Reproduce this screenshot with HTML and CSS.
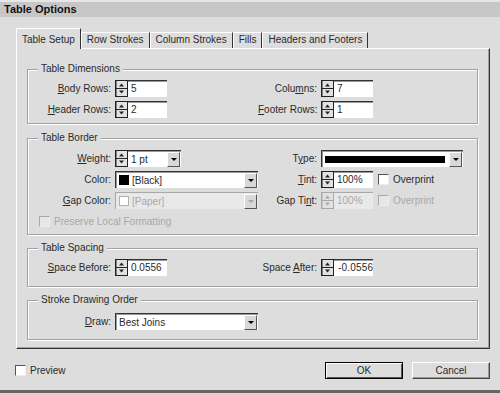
FILE: index.html
```html
<!DOCTYPE html>
<html lang="en">
  <head>
    <meta charset="UTF-8" />
    <title>Table Options</title>
    <link rel="stylesheet" href="styles.css">
  </head>
  <body>
    <!-- shared spinner glyph -->
    <svg class="defs" width="0" height="0">
      <symbol id="spin" viewBox="0 0 13 17">
        <rect x="0.5" y="0.5" width="12" height="16" fill="#e2e2e2" stroke="currentColor" />
        <path d="M1 0.5V16.5" stroke="currentColor" />
        <path d="M1 8.5H12" stroke="currentColor" />
        <path d="M4 6.5h5L6.5 3.5z M4 10.5h5L6.5 13.5z" fill="currentColor" />
      </symbol>
    </svg>

    <div class="window">
      <div class="titlebar">Table Options</div>

      <div class="content">
        <!-- Tabs -->
        <div class="tabs">
          <div class="tab active">Table Setup</div>
          <div class="tab">Row Strokes</div>
          <div class="tab">Column Strokes</div>
          <div class="tab">Fills</div>
          <div class="tab">Headers and Footers</div>
        </div>

        <div class="panel">
          <!-- Table Dimensions -->
          <fieldset class="group dims">
            <legend>Table Dimensions</legend>
            <div class="grid">
              <span class="lbl"><u>B</u>ody Rows:</span>
              <div class="spinfield"><svg class="spin"><use href="#spin" /></svg><span class="num">5</span></div>
              <span class="lbl">Colu<u>m</u>ns:</span>
              <div class="spinfield"><svg class="spin"><use href="#spin" /></svg><span class="num">7</span></div>

              <span class="lbl"><u>H</u>eader Rows:</span>
              <div class="spinfield"><svg class="spin"><use href="#spin" /></svg><span class="num">2</span></div>
              <span class="lbl"><u>F</u>ooter Rows:</span>
              <div class="spinfield"><svg class="spin"><use href="#spin" /></svg><span class="num">1</span></div>
            </div>
          </fieldset>

          <!-- Table Border -->
          <fieldset class="group border">
            <legend>Table Border</legend>
            <div class="grid">
              <span class="lbl"><u>W</u>eight:</span>
              <div class="spinfield combo">
                <svg class="spin"><use href="#spin" /></svg>
                <div class="select fill"><span class="val">1 pt</span><span class="arrow"></span></div>
              </div>
              <span class="lbl">T<u>y</u>pe:</span>
              <div class="select type"><span class="line"></span><span class="arrow"></span></div>

              <span class="lbl">Color:</span>
              <div class="select"><span class="swatch"></span><span class="val">[Black]</span><span class="arrow"></span></div>
              <span class="lbl"><u>T</u>int:</span>
              <div class="inline">
                <div class="spinfield"><svg class="spin"><use href="#spin" /></svg><span class="num">100%</span></div>
                <span class="check"></span><span>Overprint</span>
              </div>

              <span class="lbl"><u>G</u>ap Color:</span>
              <div class="select off"><span class="swatch"></span><span class="val">[Paper]</span><span class="arrow"></span></div>
              <span class="lbl">Gap Ti<u>n</u>t:</span>
              <div class="inline off">
                <div class="spinfield"><svg class="spin"><use href="#spin" /></svg><span class="num">100%</span></div>
                <span class="check"></span><span>Overprint</span>
              </div>

              <div class="inline preserve off"><span class="check"></span><span>Preserve Local Formatting</span></div>
            </div>
          </fieldset>

          <!-- Table Spacing -->
          <fieldset class="group spacing">
            <legend>Table Spacing</legend>
            <div class="grid">
              <span class="lbl"><u>S</u>pace Before:</span>
              <div class="spinfield"><svg class="spin"><use href="#spin" /></svg><span class="num">0.0556</span></div>
              <span class="lbl">Space <u>A</u>fter:</span>
              <div class="spinfield"><svg class="spin"><use href="#spin" /></svg><span class="num wide">-0.0556</span></div>
            </div>
          </fieldset>

          <!-- Stroke Drawing Order -->
          <fieldset class="group order">
            <legend>Stroke Drawing Order</legend>
            <div class="grid">
              <span class="lbl"><u>D</u>raw:</span>
              <div class="select"><span class="val">Best Joins</span><span class="arrow"></span></div>
            </div>
          </fieldset>
        </div>

        <!-- Footer -->
        <div class="footer">
          <div class="inline preview"><span class="check"></span><span>Preview</span></div>
          <button class="btn default">OK</button>
          <button class="btn">Cancel</button>
        </div>
      </div>
    </div>
  </body>
</html>
```

FILE: styles.css
```css
* {
  box-sizing: border-box;
}

body {
  margin: 0;
  background-color: #dddddd;
  font-family: "Liberation Sans", Arial, sans-serif;
  font-size: 10px;
  color: #2a2a2a;
}

.defs {
  position: absolute;
}

.window {
  width: 500px;
  height: 393px;
  background-color: #dddddd;
  border-bottom: 3px solid #666;
}

.titlebar {
  height: 17px;
  padding-left: 4px;
  background-color: #c7c7c7;
  border-top: 2px solid #e6e6e6;
  font-size: 11px;
  font-weight: bold;
  line-height: 14px;
  color: #111;
}

.content {
  padding: 11px 10px 0 16px;
}

/* Tabs */
.tabs {
  display: flex;
  align-items: flex-end;
  height: 20px;
}

.tab {
  height: 16px;
  padding: 0 5px;
  line-height: 14px;
  white-space: nowrap;
  border-top: 1px solid #fff;
  border-left: 1px solid #fff;
  border-right: 1px solid #333;
}

.tab.active {
  position: relative;
  height: 21px;
  margin-bottom: -1px;
  padding-top: 4px;
  background-color: #dddddd;
}

.panel {
  height: 301px;
  padding: 0 11px 0 10px;
  border: 1px solid;
  border-color: #fff #333 #333 #fff;
  box-shadow: inset -1px -1px 0 #a0a0a0;
}

/* Groups */
.group {
  min-width: 0;
  margin: 7px 0 0;
  padding: 6px 0 4px;
  border: 1px solid #a2a2a2;
  box-shadow: inset 1px 1px 0 #fff, 1px 1px 0 #fff;
}

.group legend {
  margin-left: 10px;
  padding: 0 3px;
  line-height: 12px;
  background-color: #dddddd;
}

.group.dims {
  margin-top: 14px;
  padding: 5px 0 5px;
}

.group.border {
  margin-top: 8px;
}

.group.spacing {
  padding: 5px 0 10px;
}

.group.order {
  padding: 7px 0 9px;
}

.grid {
  display: grid;
  grid-template-columns: 87px 143px 63px 1fr;
  grid-auto-rows: 17px;
  row-gap: 4px;
}

.lbl {
  padding-right: 4px;
  line-height: 17px;
  text-align: right;
  white-space: nowrap;
}

/* Fields */
.spinfield {
  display: flex;
  width: 52px;
  height: 17px;
}

.spinfield.combo {
  width: 66px;
}

.spin {
  flex: none;
  width: 13px;
  height: 17px;
  color: #222;
}

.num {
  flex: 1;
  padding-left: 3px;
  overflow: hidden;
  white-space: nowrap;
  line-height: 15px;
  background-color: #fff;
  border-top: 1px solid #333;
  box-shadow: inset 0 1px 0 #9a9a9a;
}

.num.wide {
  padding-left: 4px;
  letter-spacing: 0.2px;
}

.select {
  display: flex;
  align-items: center;
  width: 143px;
  height: 17px;
  background-color: #fff;
  border-top: 1px solid #333;
  border-left: 1px solid #333;
  box-shadow: inset 1px 1px 0 #9a9a9a;
}

.select.fill {
  flex: 1;
  width: auto;
  border-left: none;
  box-shadow: inset 0 1px 0 #9a9a9a;
}

.select.type {
  width: 142px;
}

.select .val {
  flex: 1;
  padding-left: 3px;
  white-space: nowrap;
}

.arrow {
  display: flex;
  align-items: center;
  justify-content: center;
  flex: none;
  width: 13px;
  height: 15px;
  margin: 1px 1px 0 0;
  background-color: #d8d8d8;
  border: 1px solid;
  border-color: #fff #555 #555 #fff;
}

.arrow::after {
  content: "";
  border-left: 3px solid transparent;
  border-right: 3px solid transparent;
  border-top: 3px solid #000;
}

.swatch {
  flex: none;
  width: 10px;
  height: 10px;
  margin-left: 3px;
  background-color: #000;
}

.line {
  flex: 1;
  height: 7px;
  margin: 1px 4px 0 3px;
  background-color: #000;
}

.inline {
  display: flex;
  align-items: center;
  gap: 4px;
  white-space: nowrap;
}

.inline .spinfield {
  margin-right: 1px;
}

.check {
  flex: none;
  width: 11px;
  height: 11px;
  background-color: #fff;
  border: 1px solid;
  border-color: #555 #eee #eee #555;
}

.preserve {
  grid-column: 1 / -1;
  height: 14px;
  margin-top: 1px;
  padding-left: 11px;
}

/* Disabled */
.off {
  color: #a8a8a8;
}

.off .spin {
  color: #a8a8a8;
}

.off .num,
.select.off {
  background-color: #e9e9e9;
  border-color: #a8a8a8;
  box-shadow: none;
}

.off .swatch {
  background-color: #fff;
  border: 1px solid #b0b0b0;
}

.off .check {
  background-color: #e6e6e6;
  border-color: #a8a8a8 #eee #eee #a8a8a8;
}

.off .arrow::after {
  border-top-color: #a8a8a8;
}

/* Footer */
.footer {
  display: flex;
  align-items: center;
  gap: 9px;
  margin-top: 13px;
}

.preview {
  margin-left: -1px;
  margin-right: auto;
}

.btn {
  width: 78px;
  height: 17px;
  padding: 0;
  font-family: inherit;
  font-size: 10px;
  color: #2a2a2a;
  background-color: #dddddd;
  border: 1px solid;
  border-color: #fff #444 #444 #fff;
  box-shadow: inset -1px -1px 0 #999;
}

.btn.default {
  border-color: #000;
  box-shadow: inset 1px 1px 0 #fff, inset -1px -1px 0 #555;
}
```
